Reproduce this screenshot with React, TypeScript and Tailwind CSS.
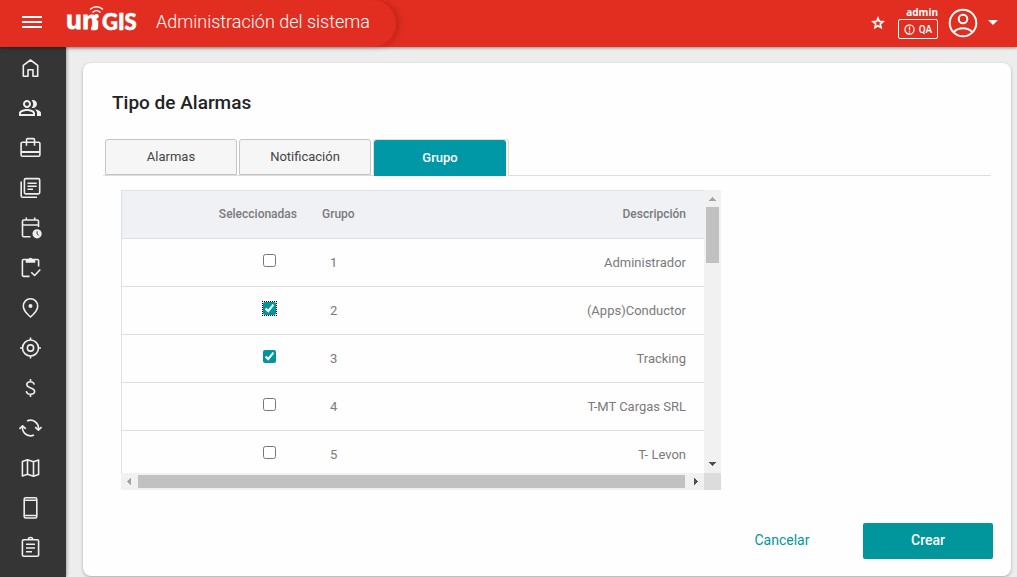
import type { ReactNode } from "react";
import { MdOutlinePeopleAlt } from "react-icons/md";

function Stroke({ children }: { children: ReactNode }) {
  return (
    <svg
      viewBox="-0.5 0 25 25"
      className="size-[25px]"
      fill="none"
      stroke="currentColor"
      strokeWidth="1.6"
      strokeLinejoin="round"
      aria-hidden="true"
    >
      {children}
    </svg>
  );
}

const navItems: { label: string; icon: ReactNode }[] = [
  {
    label: "Inicio",
    icon: (
      <Stroke>
        <path d="M4.8 20.2V9.4L12 4l7.2 5.4v10.8h-4.7v-6.4h-5v6.4z" />
      </Stroke>
    ),
  },
  { label: "Usuarios", icon: <MdOutlinePeopleAlt className="size-6" /> },
  {
    label: "Operaciones",
    icon: (
      <Stroke>
        <rect x="2.6" y="6.2" width="18.8" height="14" rx="1.3" />
        <path d="M2.6 16h18.8" strokeWidth="2" />
        <path d="M8 9.8V3.8a1.2 1.2 0 0 1 1.2-1.2h5.6A1.2 1.2 0 0 1 16 3.8v6" />
      </Stroke>
    ),
  },
  {
    label: "Documentos",
    icon: (
      <Stroke>
        <rect x="5.9" y="2.6" width="15.3" height="15.3" rx="1.3" />
        <path d="M2.7 5.5v14.500a1.3 1.3 0 0 0 1.3 1.3h14.5M9 7.3h9.200M9 10.3h9.200M9 13.3h5.500" />
      </Stroke>
    ),
  },
  {
    label: "Agenda",
    icon: (
      <Stroke>
        <path d="M12 20.8H5.3a1.3 1.3 0 0 1-1.3-1.3V5.3A1.3 1.3 0 0 1 5.3 4h13.4A1.3 1.3 0 0 1 20 5.3V11M4 9h16M7.8 1.5V4M16.2 1.5V4" />
        <circle cx="18.6" cy="17.8" r="4.6" fill="currentColor" stroke="none" />
        <path d="M18.6 15.3v2.6l1.6 1.6" stroke="#353535" strokeWidth="1" />
      </Stroke>
    ),
  },
  {
    label: "Tareas",
    icon: (
      <Stroke>
        <path d="M11 20.4H5.1a1.2 1.2 0 0 1-1.2-1.2V4.7a1.2 1.2 0 0 1 1.2-1.2h13.8a1.2 1.2 0 0 1 1.2 1.2V10.5" />
        <path d="M7.2 3.2h2.7a2.2 2.2 0 0 1 4.2 0h2.7v3.6H7.2z" fill="currentColor" stroke="none" />
        <path d="M12.8 16.2l3.3 3.3 5.7-6" />
      </Stroke>
    ),
  },
  {
    label: "Ubicaciones",
    icon: (
      <Stroke>
        <path d="M12 21c4.8-4.2 7.2-7.8 7.2-10.8C19.2 5.8 15.9 2.8 12 2.8S4.8 5.8 4.8 10.2C4.8 13.2 7.2 16.8 12 21z" />
        <circle cx="12" cy="10" r="2" fill="currentColor" stroke="none" />
      </Stroke>
    ),
  },
  {
    label: "Seguimiento",
    icon: (
      <Stroke>
        <circle cx="12" cy="12" r="8" />
        <circle cx="12" cy="12" r="3.1" />
        <path d="M12 1.5v2.500M12 20v2.500M1.500 12H4M20 12h2.500" />
      </Stroke>
    ),
  },
  {
    label: "Costos",
    icon: (
      <Stroke>
        <path d="M15.8 8.6C15.3 6.6 13.9 5.7 12 5.7c-2.2 0-3.7 1.1-3.7 2.9 0 4.3 7.8 2.4 7.8 6.7 0 2-1.8 3-4 3s-3.9-1.1-4.3-3.2M12 3v2.7M12 18.3V21" />
      </Stroke>
    ),
  },
  {
    label: "Sincronizar",
    icon: (
      <Stroke>
        <path d="M8.5 5a8 8 0 0 1 11.4 8.3M15.5 19A8 8 0 0 1 4.1 10.7" />
        <path d="M16.7 11.2l3.2 3 3.2-3M0.9 12.8l3.2-3 3.2 3" />
      </Stroke>
    ),
  },
  {
    label: "Mapas",
    icon: (
      <Stroke>
        <path d="M3.9 5.6L9 3.8l6 2 5.1-1.8v14.4L15 20.2l-6-2-5.1 1.8zM9 3.8v14.4M15 5.8v14.4" />
      </Stroke>
    ),
  },
  {
    label: "Dispositivos",
    icon: (
      <Stroke>
        <rect x="5.7" y="1.8" width="12.6" height="20.2" rx="1.5" />
        <path d="M5.7 4.3h12.6M5.7 19.5h12.6" />
      </Stroke>
    ),
  },
  {
    label: "Reportes",
    icon: (
      <Stroke>
        <rect x="3.9" y="3.7" width="16.2" height="16.5" rx="1.3" />
        <path d="M9.8 3.7a2.2 2.2 0 0 1 4.4 0M7.5 8.2h9M7.5 12h9M7.5 15.8h6" />
      </Stroke>
    ),
  },
];

const groups = [
  { id: 1, name: "Administrador", checked: false },
  { id: 2, name: "(Apps)Conductor", checked: true, focused: true },
  { id: 3, name: "Tracking", checked: true },
  { id: 4, name: "T-MT Cargas SRL", checked: false },
  { id: 5, name: "T- Levon", checked: false },
];

function Logo() {
  return (
    <a href="#inicio" aria-label="UNIGIS" className="block">
      <svg viewBox="0 0 70 34" className="h-[34px] w-[70px] overflow-visible" fill="none">
        <g fill="#fff" stroke="#fff" fontWeight="900">
          <text x="-1" y="26" fontSize="26" strokeWidth="0.8" fontFamily="'Liberation Sans Narrow', 'Liberation Sans', sans-serif">un</text>
          <text x="35" y="27" fontSize="22" strokeWidth="0.6" fontFamily="Lato, sans-serif">GIS</text>
        </g>
        <circle cx="29.5" cy="13.2" r="2.3" fill="#fff" />
        <path d="M29.5 17.5v6.5q0 1.500-1.500 1.500h-4" stroke="#fff" strokeWidth="3.4" />
        <path d="M26 9.2a5 5 0 0 1 7 0M23.500 6a8.800 8.800 0 0 1 12 0" stroke="#fff" strokeWidth="1.5" strokeLinecap="round" />
      </svg>
    </a>
  );
}

function Header() {
  return (
    <header className="relative z-10 flex h-[47px] items-stretch justify-between bg-[#e12e21] text-white shadow-[0_1px_3px_rgba(0,0,0,0.4)]">
      <div className="flex items-center rounded-r-[24px] pr-[26px] pb-[3px] pl-[22px] shadow-[4px_0_6px_-1px_rgba(120,20,10,0.35)]">
        <button type="button" aria-label="Menú" className="flex h-6 w-5 items-center">
          <svg viewBox="0 0 20 12" className="h-3 w-5" aria-hidden="true">
            <path d="M0 1h20M0 6h20M0 11h20" stroke="#fff" strokeWidth="2" />
          </svg>
        </button>
        <div className="ml-[25px] self-start pt-[3px]">
          <Logo />
        </div>
        <h1 className="ml-[19px] text-[18px] leading-6 font-light">Administración del sistema</h1>
      </div>
      <div className="flex items-center pr-[19px] pb-[2px]">
        <button type="button" aria-label="Favoritos" className="mr-[13px]">
          <svg viewBox="0 0 14 14" className="size-[14px]" fill="none" stroke="#fff" strokeWidth="1.6" aria-hidden="true">
            <path d="M7 2.100l1.400 3.300 3.600.3-2.700 2.400.8 3.500L7 9.700l-3.100 1.900.8-3.500L2 5.700l3.600-.3z" />
          </svg>
        </button>
        <div className="flex flex-col items-end self-start pt-[5px]">
          <span className="font-['Open_Sans',sans-serif] text-[10px] leading-[14px] font-bold">admin</span>
          <span className="flex h-5 w-10 items-center justify-center gap-1 rounded-[2px] border border-white text-[10px] font-medium">
            <svg viewBox="0 0 11 11" className="size-[11px]" fill="none" stroke="#fff" aria-hidden="true">
              <circle cx="5.5" cy="5.5" r="4.6" strokeWidth="1.2" />
              <path d="M5.5 2.5v3.800M5.500 7.300v1.300" strokeWidth="1.3" />
            </svg>
            QA
          </span>
        </div>
        <button type="button" aria-label="Cuenta" className="ml-[10px] flex items-center gap-[10px]">
          <svg viewBox="0 0 30 30" className="size-[30px]" fill="none" stroke="#fff" strokeWidth="2" aria-hidden="true">
            <circle cx="15" cy="15" r="13.3" />
            <circle cx="15" cy="11" r="4.3" />
            <path d="M5.5 24c5.500-5 13.500-5 19 0" />
          </svg>
          <svg viewBox="0 0 10 5" className="h-[5px] w-[10px]" aria-hidden="true">
            <path d="M0 0h10L5 5z" fill="#fff" />
          </svg>
        </button>
      </div>
    </header>
  );
}

function Sidebar() {
  return (
    <nav className="w-[66px] shrink-0 bg-[#353535] pt-[9px] pl-[18px] text-[#eee] shadow-[1px_0_3px_rgba(0,0,0,0.3)]">
      <ul className="-mb-4">
        {navItems.map((item) => (
          <li key={item.label} className="h-10">
            <a href="#menu" aria-label={item.label} className="block w-[25px]">
              {item.icon}
            </a>
          </li>
        ))}
      </ul>
    </nav>
  );
}

function Tabs() {
  const idle =
    "h-9 w-[132px] rounded-t-[3px] border border-[#c5c5c5] bg-[#f6f6f6] text-[13px] text-[#454545]";
  return (
    <div role="tablist" className="mr-[2px] flex gap-[2px] border-b border-[#dddddd] pl-[2px]">
      <button type="button" role="tab" aria-selected="false" className={idle}>Alarmas</button>
      <button type="button" role="tab" aria-selected="false" className={idle}>Notificación</button>
      <div className="-mb-px flex h-[37px] w-[136px] rounded-t-[3px] border border-b-0 border-[#dddddd] bg-white pr-[2px]">
        <button type="button" role="tab" aria-selected="true" className="w-full rounded-t-[3px] bg-[#0097a7] text-[13px] font-medium text-white">
          Grupo
        </button>
      </div>
    </div>
  );
}

function Arrow({ d, color }: { d: string; color: string }) {
  return (
    <svg viewBox="0 0 17 17" className="size-[17px] shrink-0" shapeRendering="crispEdges" aria-hidden="true">
      <path d={d} fill={color} />
    </svg>
  );
}

function GroupTable() {
  return (
    <div className="grid h-[300px] max-w-[600px] grid-cols-[minmax(0,1fr)_17px] grid-rows-[minmax(0,1fr)_17px]">
      <div className="overflow-hidden border-t border-l border-[#dcdfe3]">
        <table className="w-full table-fixed border-collapse text-[13px] text-[#7a7a7a]">
          <thead>
            <tr className="h-[47px] border-b border-[#dcdfe3] bg-[#f0f1f5] text-[12px]">
              <th scope="col" className="w-[175px] pr-0 text-right font-medium">Seleccionadas</th>
              <th scope="col" className="w-[75px] pl-[25px] text-left font-medium">Grupo</th>
              <th scope="col" className="pr-[18px] text-right font-medium">Descripción</th>
            </tr>
          </thead>
          <tbody>
            {groups.map((g) => (
              <tr key={g.id} className="h-12 border-b border-[#dcdfe3]">
                <td className="pr-[21px] pb-[3px]">
                  <input
                    type="checkbox"
                    defaultChecked={g.checked}
                    aria-label={g.name}
                    className={
                      g.focused
                        ? "ml-auto block size-[13px] accent-[#00969b] outline-1 outline-dotted outline-black"
                        : "ml-auto block size-[13px] accent-[#00969b]"
                    }
                  />
                </td>
                <td className="pt-[2px] pl-[33px]">{g.id}</td>
                <td className="pt-[2px] pr-[18px] text-right">{g.name}</td>
              </tr>
            ))}
          </tbody>
        </table>
      </div>
      <div className="flex flex-col bg-[#f1f1f1]">
        <Arrow d="M5 11h7l-3.500-4z" color="#a3a3a3" />
        <div className="mx-[2px] h-14 bg-[#c1c1c1]" />
        <div className="mt-auto h-[17px]">
          <Arrow d="M5 6h7l-3.500 4z" color="#505050" />
        </div>
      </div>
      <div className="flex bg-[#f1f1f1]">
        <Arrow d="M10 5v7L6 8.500z" color="#a3a3a3" />
        <div className="my-[2px] grow bg-[#c1c1c1]" />
        <div className="w-[19px] pl-[2px]">
          <Arrow d="M7 5v7l4-3.500z" color="#505050" />
        </div>
      </div>
      <div className="bg-[#dcdcdc]" />
    </div>
  );
}

export default function App() {
  return (
    <div className="flex min-h-screen flex-col bg-[#ededed] font-[Roboto,sans-serif]">
      <Header />
      <div className="flex grow">
        <Sidebar />
        <main className="flex min-w-0 grow flex-col pt-4 pr-[6px] pb-[1px] pl-[17px]">
          <section className="flex grow flex-col rounded-lg bg-[#fefefe] pr-[18px] pb-[17px] pl-5 shadow-[0_1px_3px_rgba(0,0,0,0.3)]">
            <h2 className="pt-7 pb-6 pl-[9px] text-[19px] leading-6 font-medium text-[#222]">Tipo de Alarmas</h2>
            <Tabs />
            <div className="pt-[14px] pl-[18px]">
              <GroupTable />
            </div>
            <div className="mt-auto flex justify-end gap-4">
              <button type="button" className="h-9 w-[130px] pb-[2px] text-[14px] text-[#00969b]">Cancelar</button>
              <button type="button" className="h-9 w-[130px] rounded-[2px] bg-[#00969b] pb-[2px] text-[14px] font-medium text-white">Crear</button>
            </div>
          </section>
        </main>
      </div>
    </div>
  );
}
